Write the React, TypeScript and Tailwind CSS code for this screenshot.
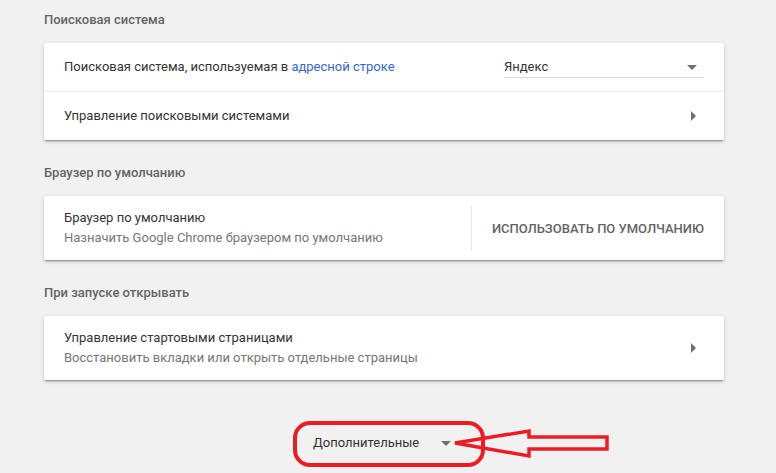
import React from 'react';

const card =
  'bg-white rounded-[2px] shadow-[0_2px_2px_0_rgba(0,0,0,0.14),0_1px_5px_0_rgba(0,0,0,0.12),0_3px_1px_-2px_rgba(0,0,0,0.2)]';

function ArrowRight() {
  return (
    <svg width="6" height="10" viewBox="0 0 6 10" className="shrink-0">
      <path d="M0 0 L5 5 L0 10 Z" fill="#6e6e6e" />
    </svg>
  );
}

function ArrowDown() {
  return (
    <svg width="10" height="5" viewBox="0 0 10 5" className="shrink-0">
      <path d="M0 0 L10 0 L5 5 Z" fill="#6e6e6e" />
    </svg>
  );
}

export default function App() {
  return (
    <div className="relative h-[473px] w-[776px] overflow-hidden bg-[#f1f1f1] font-['Roboto',sans-serif] text-[13px] leading-[18px]">
      <div className="ml-[44px] w-[680px]">
        {/* Поисковая система */}
        <div className="pt-[11px] pb-[14px] font-medium text-[#646464]">Поисковая система</div>
        <div className={card}>
          <div className="flex h-[48px] items-center pl-[20px] pr-[20px]">
            <div className="flex-1 text-[#333]">
              Поисковая система, используемая в <span className="text-[#3367d6]">адресной строке</span>
            </div>
            <div className="mt-[1px] flex w-[200px] items-center justify-between border-b border-[#dadada] pb-[1px] pt-[1px]">
              <span className="font-normal text-[#333]">Яндекс</span>
              <span className="mr-[7px]">
                <ArrowDown />
              </span>
            </div>
          </div>
          <div className="flex h-[49px] items-center border-t border-[#e9e9e9] pl-[20px] pr-[27px]">
            <div className="flex-1 text-[#333]">Управление поисковыми системами</div>
            <ArrowRight />
          </div>
        </div>

        {/* Браузер по умолчанию */}
        <div className="pt-[24px] pb-[14px] font-medium text-[#646464]">Браузер по умолчанию</div>
        <div className={`${card} flex h-[64px] items-center pl-[20px]`}>
          <div className="flex-1 leading-[20px]">
            <div className="text-[#333]">Браузер по умолчанию</div>
            <div className="text-[#767676]">Назначить Google Chrome браузером по умолчанию</div>
          </div>
          <div className="h-[45px] border-l border-[#e5e5e5]" />
          <div className="pl-[20px] pr-[20px] pt-[1px] font-medium uppercase text-[#646464]">
            Использовать по умолчанию
          </div>
        </div>

        {/* При запуске открывать */}
        <div className="pt-[24px] pb-[14px] font-medium text-[#646464]">При запуске открывать</div>
        <div className={`${card} flex h-[64px] items-center pl-[20px] pr-[27px]`}>
          <div className="flex-1 leading-[20px]">
            <div className="text-[#333]">Управление стартовыми страницами</div>
            <div className="text-[#767676]">Восстановить вкладки или открыть отдельные страницы</div>
          </div>
          <ArrowRight />
        </div>

        {/* Дополнительные */}
        <div className="mt-[54px] flex items-center pl-[269px]">
          <span className="text-[#333]">Дополнительные</span>
          <span className="ml-[22px]">
            <ArrowDown />
          </span>
        </div>
      </div>

      {/* red annotation over the button */}
      <svg
        className="pointer-events-none absolute left-0 top-0"
        width="776"
        height="473"
        viewBox="0 0 776 473"
      >
        <rect x="295" y="423" width="188" height="42" rx="15" fill="none" stroke="#ed1c24" strokeWidth="4" />
        <path
          d="M455 443 L529 431 L529 437 L607 437 L607 449 L529 449 L529 456 Z"
          fill="none"
          stroke="#ed1c24"
          strokeWidth="3.5"
          strokeLinejoin="miter"
        />
      </svg>
    </div>
  );
}
